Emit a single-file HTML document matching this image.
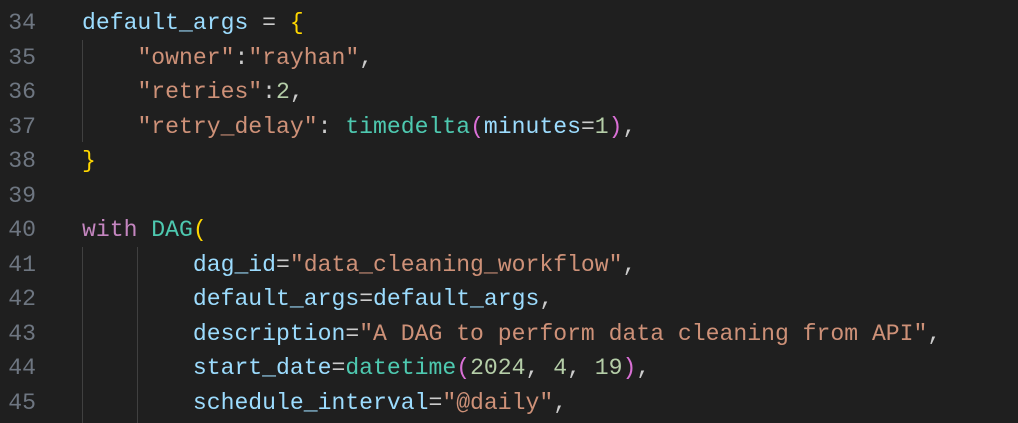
<!DOCTYPE html>
<html><head><style>
body{margin:0;background:#1f1f1f;width:1018px;height:423px;overflow:hidden;font-family:"Liberation Mono",monospace;font-size:23.1px;}
.l{position:absolute;left:0;height:34.5px;line-height:34.5px;white-space:pre;color:#cccccc}
.n{position:absolute;left:0;width:36px;text-align:right;color:#6e7681}
.c{position:absolute;left:82px}
.g{position:absolute;width:1px;background:#404040}
.v{color:#9cdcfe}.s{color:#ce9178}.m{color:#b5cea8}.t{color:#4ec9b0}.k{color:#c586c0}.y{color:#ffd700}.p{color:#da70d6}
</style></head><body>
<div class="g" style="left:82px;top:40px;height:102px"></div>
<div class="g" style="left:82px;top:247px;height:176px"></div>
<div class="g" style="left:137px;top:247px;height:176px"></div>
<div class="l" style="top:6px"><span class="n">34</span><span class="c"><span class="v">default_args</span> = <span class="y">{</span></span></div>
<div class="l" style="top:40.5px"><span class="n">35</span><span class="c">    <span class="s">"owner"</span>:<span class="s">"rayhan"</span>,</span></div>
<div class="l" style="top:75px"><span class="n">36</span><span class="c">    <span class="s">"retries"</span>:<span class="m">2</span>,</span></div>
<div class="l" style="top:109.5px"><span class="n">37</span><span class="c">    <span class="s">"retry_delay"</span>: <span class="t">timedelta</span><span class="p">(</span><span class="v">minutes</span>=<span class="m">1</span><span class="p">)</span>,</span></div>
<div class="l" style="top:144px"><span class="n">38</span><span class="c"><span class="y">}</span></span></div>
<div class="l" style="top:178.5px"><span class="n">39</span></div>
<div class="l" style="top:213px"><span class="n">40</span><span class="c"><span class="k">with</span> <span class="t">DAG</span><span class="y">(</span></span></div>
<div class="l" style="top:247.5px"><span class="n">41</span><span class="c">        <span class="v">dag_id</span>=<span class="s">"data_cleaning_workflow"</span>,</span></div>
<div class="l" style="top:282px"><span class="n">42</span><span class="c">        <span class="v">default_args</span>=<span class="v">default_args</span>,</span></div>
<div class="l" style="top:316.5px"><span class="n">43</span><span class="c">        <span class="v">description</span>=<span class="s">"A DAG to perform data cleaning from API"</span>,</span></div>
<div class="l" style="top:351px"><span class="n">44</span><span class="c">        <span class="v">start_date</span>=<span class="t">datetime</span><span class="p">(</span><span class="m">2024</span>, <span class="m">4</span>, <span class="m">19</span><span class="p">)</span>,</span></div>
<div class="l" style="top:385.5px"><span class="n">45</span><span class="c">        <span class="v">schedule_interval</span>=<span class="s">"@daily"</span>,</span></div>
</body></html>
